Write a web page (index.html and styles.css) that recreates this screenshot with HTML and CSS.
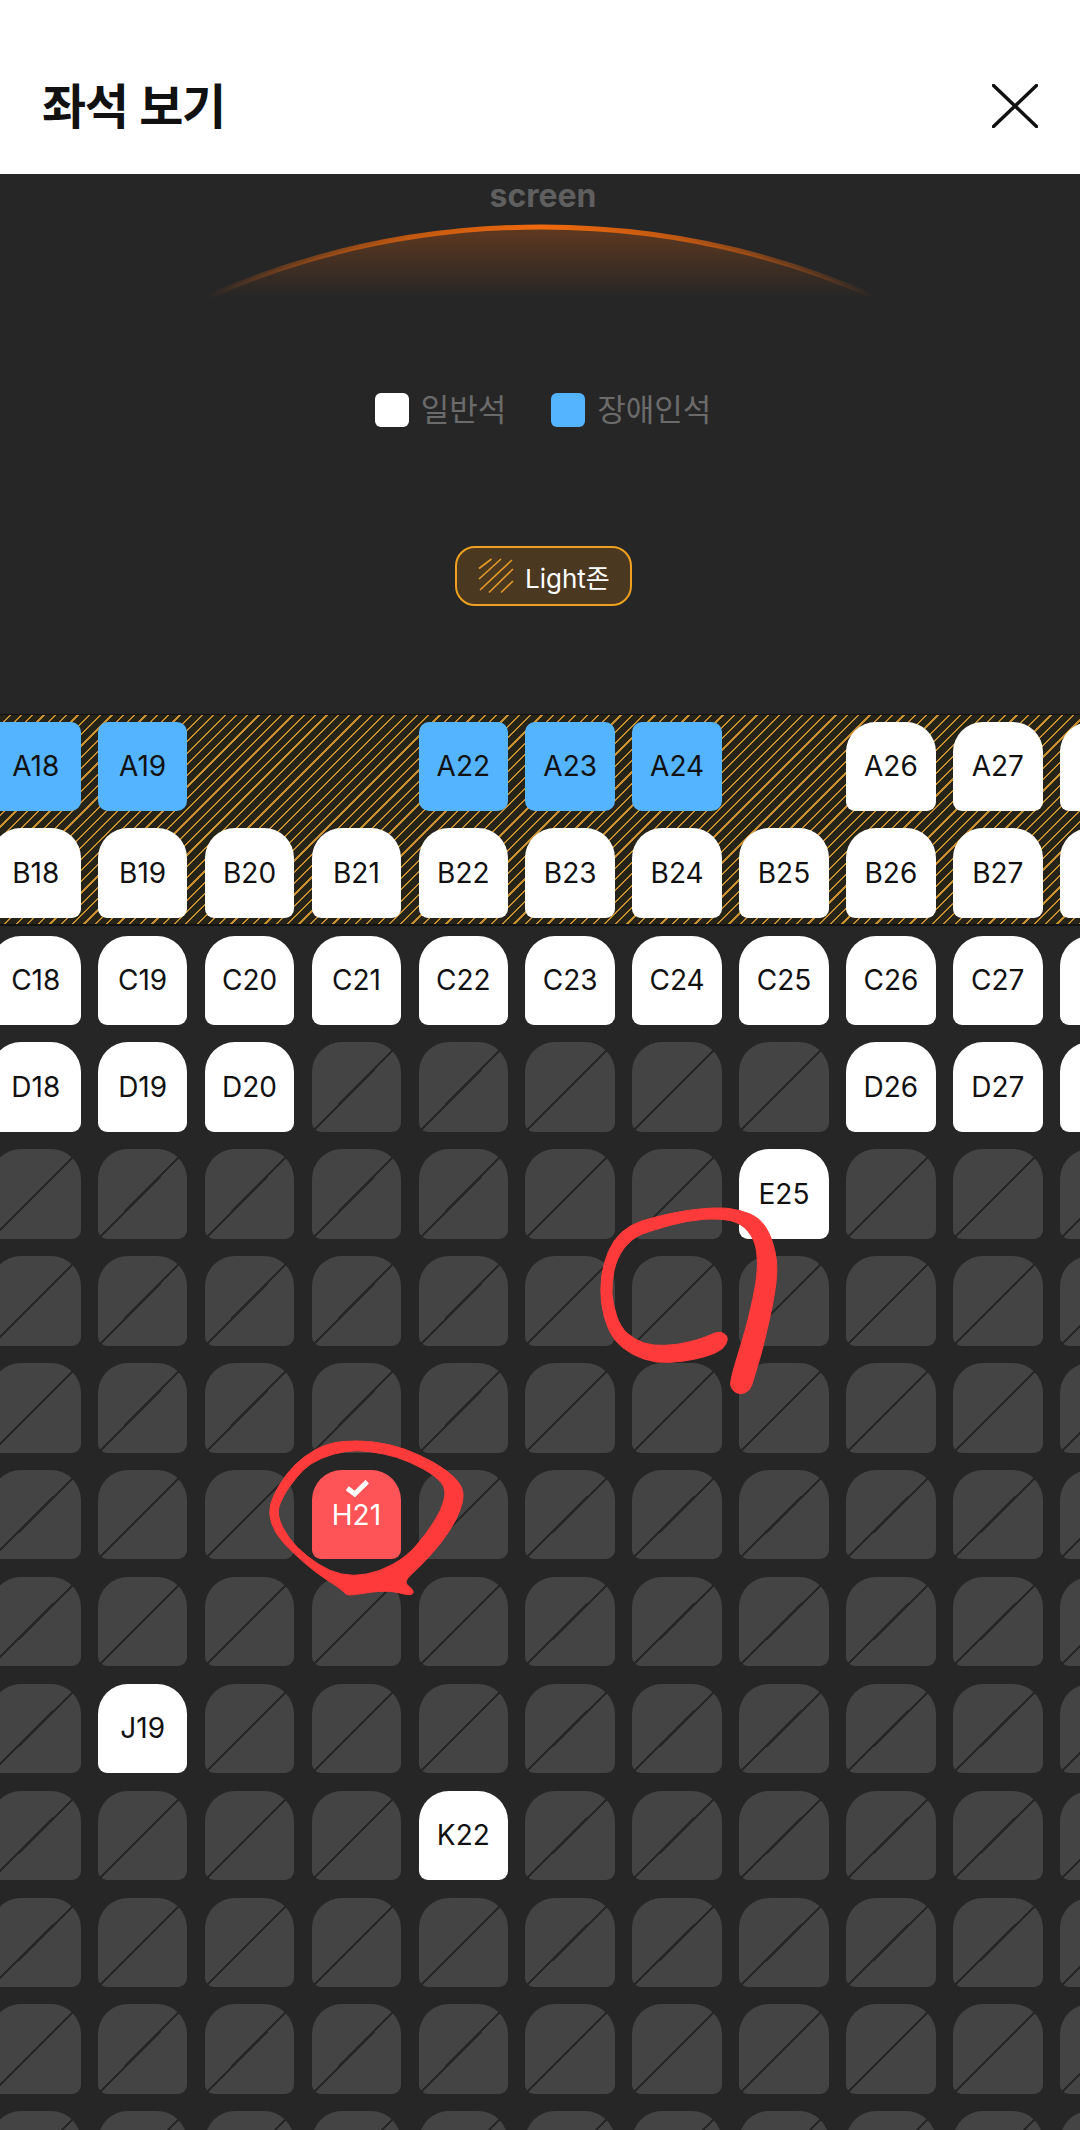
FILE: index.html
```html
<!DOCTYPE html>
<html lang="ko">
<head>
  <meta charset="UTF-8">
  <title>좌석 보기</title>
  <link rel="stylesheet" href="styles.css">
</head>
<body>
  <header class="top-bar">
    <h1>좌석 보기</h1>
    <svg class="close" viewBox="0 0 46 44" width="46" height="44">
      <path d="M1.5 1.5 L44.5 42.5 M44.5 1.5 L1.5 42.5"/>
    </svg>
  </header>

  <main class="hall">
    <div class="screen-label">screen</div>
    <svg class="screen-arc" viewBox="0 0 1080 90" width="1080" height="90">
      <defs>
        <linearGradient id="glow" x1="0" y1="0" x2="0" y2="1">
          <stop offset="0" stop-color="#e8650f" stop-opacity=".3"/>
          <stop offset="1" stop-color="#e8650f" stop-opacity="0"/>
        </linearGradient>
        <linearGradient id="edge" x1="0" y1="0" x2="1" y2="0">
          <stop offset="0" stop-color="#e8650f" stop-opacity="0"/>
          <stop offset=".3" stop-color="#d9600f" stop-opacity=".85"/>
          <stop offset=".5" stop-color="#f06a0e"/>
          <stop offset=".7" stop-color="#d9600f" stop-opacity=".85"/>
          <stop offset="1" stop-color="#e8650f" stop-opacity="0"/>
        </linearGradient>
      </defs>
      <path d="M207 78 A832 832 0 0 1 875 78 Z" fill="url(#glow)"/>
      <path d="M207 78 A832 832 0 0 1 875 78" fill="none" stroke="url(#edge)" stroke-width="5"/>
    </svg>

    <div class="legend">
      <span class="legend-item"><i class="swatch"></i><span>일반석</span></span>
      <span class="legend-item"><i class="swatch swatch-blue"></i><span>장애인석</span></span>
    </div>

    <div class="zone-tag">
      <svg viewBox="0 0 36 36" width="36" height="36">
        <path d="M1 10.5 L13.5 1 M1 21 L23 1 M2 32 L34 2 M11 34.5 L35 11 M23 34.5 L35 23"/>
      </svg>
      <span>Light존</span>
    </div>

    <section class="light-zone">
      <div class="seats">
        <div class="seat blue">A18</div><div class="seat blue">A19</div><div></div><div></div><div class="seat blue">A22</div><div class="seat blue">A23</div><div class="seat blue">A24</div><div></div><div class="seat">A26</div><div class="seat">A27</div><div class="seat"></div>
        <div class="seat">B18</div><div class="seat">B19</div><div class="seat">B20</div><div class="seat">B21</div><div class="seat">B22</div><div class="seat">B23</div><div class="seat">B24</div><div class="seat">B25</div><div class="seat">B26</div><div class="seat">B27</div><div class="seat"></div>
      </div>
    </section>

    <section class="seats rest">
      <div class="seat">C18</div><div class="seat">C19</div><div class="seat">C20</div><div class="seat">C21</div><div class="seat">C22</div><div class="seat">C23</div><div class="seat">C24</div><div class="seat">C25</div><div class="seat">C26</div><div class="seat">C27</div><div class="seat"></div>
      <div class="seat">D18</div><div class="seat">D19</div><div class="seat">D20</div><div class="seat off"></div><div class="seat off"></div><div class="seat off"></div><div class="seat off"></div><div class="seat off"></div><div class="seat">D26</div><div class="seat">D27</div><div class="seat"></div>
      <div class="seat off"></div><div class="seat off"></div><div class="seat off"></div><div class="seat off"></div><div class="seat off"></div><div class="seat off"></div><div class="seat off"></div><div class="seat">E25</div><div class="seat off"></div><div class="seat off"></div><div class="seat off"></div>
      <div class="seat off"></div><div class="seat off"></div><div class="seat off"></div><div class="seat off"></div><div class="seat off"></div><div class="seat off"></div><div class="seat off"></div><div class="seat off"></div><div class="seat off"></div><div class="seat off"></div><div class="seat off"></div>
      <div class="seat off"></div><div class="seat off"></div><div class="seat off"></div><div class="seat off"></div><div class="seat off"></div><div class="seat off"></div><div class="seat off"></div><div class="seat off"></div><div class="seat off"></div><div class="seat off"></div><div class="seat off"></div>
      <div class="seat off"></div><div class="seat off"></div><div class="seat off"></div>
      <div class="seat picked">
        <svg viewBox="0 0 25 17" width="25" height="17"><path d="M3.3 8.3 L10.7 14 L23.3 1.7"/></svg>
        H21
      </div>
      <div class="seat off"></div><div class="seat off"></div><div class="seat off"></div><div class="seat off"></div><div class="seat off"></div><div class="seat off"></div><div class="seat off"></div>
      <div class="seat off"></div><div class="seat off"></div><div class="seat off"></div><div class="seat off"></div><div class="seat off"></div><div class="seat off"></div><div class="seat off"></div><div class="seat off"></div><div class="seat off"></div><div class="seat off"></div><div class="seat off"></div>
      <div class="seat off"></div><div class="seat">J19</div><div class="seat off"></div><div class="seat off"></div><div class="seat off"></div><div class="seat off"></div><div class="seat off"></div><div class="seat off"></div><div class="seat off"></div><div class="seat off"></div><div class="seat off"></div>
      <div class="seat off"></div><div class="seat off"></div><div class="seat off"></div><div class="seat off"></div><div class="seat">K22</div><div class="seat off"></div><div class="seat off"></div><div class="seat off"></div><div class="seat off"></div><div class="seat off"></div><div class="seat off"></div>
      <div class="seat off"></div><div class="seat off"></div><div class="seat off"></div><div class="seat off"></div><div class="seat off"></div><div class="seat off"></div><div class="seat off"></div><div class="seat off"></div><div class="seat off"></div><div class="seat off"></div><div class="seat off"></div>
      <div class="seat off"></div><div class="seat off"></div><div class="seat off"></div><div class="seat off"></div><div class="seat off"></div><div class="seat off"></div><div class="seat off"></div><div class="seat off"></div><div class="seat off"></div><div class="seat off"></div><div class="seat off"></div>
      <div class="seat off"></div><div class="seat off"></div><div class="seat off"></div><div class="seat off"></div><div class="seat off"></div><div class="seat off"></div><div class="seat off"></div><div class="seat off"></div><div class="seat off"></div><div class="seat off"></div><div class="seat off"></div>
    </section>
  </main>

  <!-- Red pen marks over the seats -->
  <svg class="pen pen-hook" viewBox="0 0 840 900" width="280" height="300">
    <path d="M497 643 Q505 628 500 619 Q495 610 482 607 Q470 605 450 615 Q430 625 390 635 Q350 645 315 646 Q280 648 252 639 Q225 630 202 610 Q180 590 169 555 Q158 520 156 490 Q155 460 162 422 Q170 385 192 355 Q215 325 247 312 Q280 300 330 286 Q380 272 430 268 Q480 265 512 272 Q545 280 565 305 Q585 330 590 365 Q595 400 590 440 Q585 480 572 535 Q560 590 535 670 Q510 750 512 765 Q515 780 527 787 Q540 795 555 788 Q570 782 575 766 Q580 750 592 710 Q605 670 622 595 Q640 520 647 465 Q655 410 645 365 Q635 320 617 292 Q600 265 570 252 Q540 240 510 236 Q480 232 430 236 Q380 240 330 251 Q280 262 245 273 Q210 285 185 307 Q160 330 145 365 Q130 400 125 440 Q120 480 125 520 Q130 560 145 595 Q160 630 187 652 Q215 675 252 687 Q290 700 330 697 Q370 695 405 687 Q440 680 465 669 Q490 658 497 643 Z"/>
  </svg>
  <svg class="pen pen-ring" viewBox="0 0 780 600" width="260" height="200">
    <path fill-rule="evenodd" d="M95 310 Q85 280 92 252 Q100 225 120 192 Q140 160 165 135 Q190 110 225 90 Q260 70 305 65 Q350 60 400 66 Q450 72 495 88 Q540 105 580 127 Q620 150 642 172 Q665 195 668 215 Q672 235 661 267 Q650 300 625 337 Q600 375 570 407 Q540 440 515 462 Q490 485 502 495 Q515 505 518 511 Q522 518 516 522 Q510 527 475 518 Q440 510 390 517 Q340 525 329 525 Q318 525 311 516 Q305 508 267 484 Q230 460 195 430 Q160 400 132 370 Q105 340 95 310 Z M127 320 Q110 285 117 260 Q125 235 147 202 Q170 170 190 150 Q210 130 245 115 Q280 100 315 95 Q350 90 390 95 Q430 100 470 112 Q510 125 550 147 Q590 170 605 190 Q620 210 612 240 Q605 270 582 305 Q560 340 530 375 Q500 410 460 432 Q420 455 380 462 Q340 470 305 462 Q270 455 235 432 Q200 410 172 382 Q145 355 127 320 Z"/>
  </svg>
</body>
</html>
```

FILE: styles.css
```css
* {
  box-sizing: border-box;
}

html, body {
  margin: 0;
  height: 2130px;
  overflow: hidden;
}

body {
  position: relative;
  background: #262626;
  font-family: Inter, "Noto Sans CJK KR", sans-serif;
}

.top-bar {
  height: 174px;
  background: #fff;
  display: flex;
  align-items: center;
  justify-content: space-between;
  padding: 32px 42px 0 42px;
}

.top-bar h1 {
  margin: 0;
  font-family: "Noto Sans CJK KR", sans-serif;
  font-size: 48px;
  font-weight: 700;
  letter-spacing: -1.5px;
  color: #111;
}

.close {
  margin-top: 5px;
  fill: none;
  stroke: #111;
  stroke-width: 3.5;
  stroke-linecap: round;
}

.hall {
  padding-top: 5px;
}

.screen-label {
  height: 40px;
  padding-left: 6px;
  line-height: 34px;
  text-align: center;
  font-size: 32px;
  font-weight: 700;
  color: #5f5f5f;
}

.screen-arc {
  display: block;
}

.legend {
  margin-top: 83px;
  height: 35px;
  padding-left: 6px;
  display: flex;
  justify-content: center;
  gap: 45px;
}

.legend-item {
  display: flex;
  align-items: center;
  gap: 12px;
  font-family: "Noto Sans CJK KR", sans-serif;
  font-size: 31px;
  color: #6b6b6b;
}

.legend-item span {
  padding-bottom: 5px;
}

.swatch {
  width: 34px;
  height: 34px;
  border-radius: 6px;
  background: #fff;
}

.swatch-blue {
  background: #55b4ff;
}

.zone-tag {
  margin: 119px 0 108px 455px;
  width: 177px;
  height: 60px;
  display: flex;
  align-items: center;
  gap: 11px;
  padding-left: 21px;
  border: 2px solid #f0a020;
  border-radius: 20px;
  background: #4a3820;
  color: #fff;
  font-size: 26px;
}

.zone-tag svg {
  flex: none;
  fill: none;
  stroke: #e59b25;
  stroke-width: 1.6;
}

.light-zone {
  height: 212px;
  padding-top: 6.5px;
  border-top: 1px solid #111;
  border-bottom: 2px solid #111;
  background: repeating-linear-gradient(135deg, #262318 0 6.4px, #c8902e 6.4px 8px);
}

.seats {
  display: grid;
  grid-template-columns: repeat(11, 89.5px);
  grid-auto-rows: 89.5px;
  gap: 17.4px;
  margin-left: -9px;
}

.rest {
  margin-top: 9.5px;
}

.seat {
  display: flex;
  align-items: center;
  justify-content: center;
  border-radius: 30px 30px 9px 9px;
  background: #fff;
  color: #111;
  font-size: 28px;
}

.blue {
  border-radius: 10px;
  background: #55b4ff;
}

.off {
  background:
    linear-gradient(to bottom right, transparent calc(50% - 1.2px), #262626 calc(50% - 1.2px), #262626 calc(50% + 1.2px), transparent calc(50% + 1.2px)),
    #444;
}

.picked {
  flex-direction: column;
  justify-content: flex-start;
  gap: 4px;
  padding-top: 10px;
  background: #ff5457;
  color: #fff;
  line-height: 28px;
}

.picked svg {
  flex: none;
  fill: none;
  stroke: #fff;
  stroke-width: 5;
}

.pen {
  position: absolute;
  fill: #ff3a3a;
  stroke: #ff3a3a;
  stroke-width: 3;
  stroke-linejoin: round;
}

.pen-hook {
  left: 560px;
  top: 1130px;
}

.pen-ring {
  left: 240px;
  top: 1420px;
}
```
